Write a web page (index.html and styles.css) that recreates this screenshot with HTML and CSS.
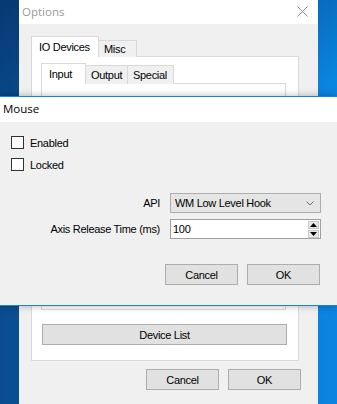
FILE: index.html
```html
<!DOCTYPE html>
<html lang="en">

<head>
    <meta charset="UTF-8">
    <title>Options</title>
    <link rel="stylesheet" href="styles.css">
</head>

<body>
    <div class="desktop">
        <!-- Options window (behind) -->
        <div class="window options">
            <div class="titlebar">
                <span class="title inactive">Options</span>
                <svg class="close" width="11" height="11" viewBox="0 0 11 11">
                    <path d="M0.5 0.5 L10.5 10.5 M10.5 0.5 L0.5 10.5" stroke="#8c8c8c" stroke-width="1" fill="none"/>
                </svg>
            </div>
            <div class="win-body">
                <div class="tabs outer-tabs">
                    <div class="tab active io-tab">IO Devices</div>
                    <div class="tab misc-tab">Misc</div>
                </div>
                <div class="tab-panel outer-panel">
                    <div class="tabs inner-tabs">
                        <div class="tab active input-tab">Input</div>
                        <div class="tab output-tab">Output</div>
                        <div class="tab special-tab">Special</div>
                    </div>
                    <div class="tab-panel inner-panel"></div>
                    <button type="button" class="btn wide">Device List</button>
                </div>
                <div class="btn-row options-buttons">
                    <button type="button" class="btn">Cancel</button>
                    <button type="button" class="btn">OK</button>
                </div>
            </div>
        </div>

        <!-- Mouse dialog (front) -->
        <div class="window dialog">
            <div class="titlebar dialog-title">
                <span class="title">Mouse</span>
            </div>
            <div class="dialog-body">
                <label class="check-row"><span class="checkbox"></span>Enabled</label>
                <label class="check-row"><span class="checkbox"></span>Locked</label>

                <div class="form-grid">
                    <span class="field-label">API</span>
                    <div class="combo">
                        <span>WM Low Level Hook</span>
                        <svg width="8" height="5" viewBox="0 0 8 5">
                            <path d="M0.5 0.5 L4 4 L7.5 0.5" stroke="#6d6d6d" stroke-width="1" fill="none"/>
                        </svg>
                    </div>
                    <span class="field-label">Axis Release Time (ms)</span>
                    <div class="spin">
                        <span class="spin-value">100</span>
                        <div class="spin-buttons">
                            <div class="spin-btn">
                                <svg width="7" height="4" viewBox="0 0 7 4"><path d="M3.5 0 L7 4 L0 4 Z" fill="#000"/></svg>
                            </div>
                            <div class="spin-btn">
                                <svg width="7" height="4" viewBox="0 0 7 4"><path d="M0 0 L7 0 L3.5 4 Z" fill="#000"/></svg>
                            </div>
                        </div>
                    </div>
                </div>

                <div class="btn-row dialog-buttons">
                    <button type="button" class="btn">Cancel</button>
                    <button type="button" class="btn">OK</button>
                </div>
            </div>
        </div>
    </div>
</body>

</html>
```

FILE: styles.css
```css
* {
    box-sizing: border-box;
}

body {
    margin: 0;
    padding: 0;
    width: 337px;
    height: 404px;
    overflow: hidden;
    font-family: "Microsoft Sans Serif", "Liberation Sans", Arial, sans-serif;
    font-size: 11px;
    letter-spacing: -0.3px;
    color: #000;
}

/* 桌面背景 */
.desktop {
    position: relative;
    width: 337px;
    height: 404px;
    background:
        linear-gradient(170deg, rgba(0, 20, 60, 0.35) 0%, rgba(0, 0, 0, 0) 30%),
        linear-gradient(90deg, #0a4c8f 0%, #0b5fae 40%, #0a86e2 100%);
}

.window {
    position: absolute;
}

.titlebar {
    display: flex;
    align-items: center;
    background-color: #fff;
}

.title {
    font-family: "Segoe UI", "Open Sans", "Noto Sans", sans-serif;
    font-size: 11.5px;
    letter-spacing: 0;
}

.title.inactive {
    color: #9a9a9a;
}

/* Options 視窗 */
.options {
    left: 19px;
    top: 0;
    width: 299px;
    height: 420px;
    background-color: #f0f0f0;
}

.options .titlebar {
    height: 24px;
    padding-left: 3px;
    justify-content: space-between;
    padding-right: 10px;
    padding-bottom: 2px;
}

.win-body {
    padding: 12px 19px 0 12px;
}

.tabs {
    display: flex;
    align-items: flex-end;
    margin-bottom: -1px;
}

.tab {
    position: relative;
    height: 17px;
    display: flex;
    align-items: center;
    background-color: #f0f0f0;
    border: 1px solid #d9d9d9;
    border-bottom: none;
    padding: 0 0 1px 5px;
}

.tab.active {
    z-index: 1;
    height: 21px;
    background-color: #fff;
    padding-left: 7px;
    padding-bottom: 0;
}

.io-tab { width: 68px; }
.misc-tab { width: 38px; border-left: none; }
.input-tab { width: 45px; height: 22px; }
.output-tab { width: 42px; height: 19px; border-left: none; }
.special-tab { width: 46px; height: 19px; border-left: none; }

.tab-panel {
    border: 1px solid #d9d9d9;
    background-color: #fff;
}

.outer-panel {
    width: 268px;
    padding: 6px 12px 15px 9px;
}

.inner-panel {
    height: 227px;
}

.btn {
    display: flex;
    align-items: center;
    justify-content: center;
    width: 73px;
    height: 21px;
    padding: 0;
    font-family: inherit;
    font-size: 11px;
    letter-spacing: -0.3px;
    color: #000;
    background-color: #e1e1e1;
    border: 1px solid #adadad;
}

.btn.wide {
    width: 245px;
    margin: 14px 0 0 1px;
}

.btn-row {
    display: flex;
    justify-content: flex-end;
    gap: 9px;
}

.options-buttons {
    margin-top: 8px;
    margin-right: -2px;
}

/* Mouse 對話框 */
.dialog {
    left: 0;
    top: 96px;
    width: 337px;
    height: 210px;
    border-top: 1px solid #1883d7;
    border-bottom: 1px solid #1883d7;
    background-color: #f0f0f0;
    box-shadow: 0 0 7px rgba(0, 0, 0, 0.3);
}

.dialog-title {
    height: 25px;
    padding-left: 3px;
    padding-bottom: 2px;
}

.dialog-body {
    padding: 14px 17px 0 11px;
}

.check-row {
    display: flex;
    align-items: center;
    gap: 6px;
    height: 13px;
    margin-bottom: 9px;
}

.checkbox {
    width: 13px;
    height: 13px;
    border: 1px solid #333;
    background-color: #fff;
}

.form-grid {
    display: grid;
    grid-template-columns: auto 151px;
    justify-content: end;
    align-items: center;
    column-gap: 10px;
    row-gap: 6px;
    margin-top: 22px;
    margin-right: -1px;
}

.field-label {
    text-align: right;
}

.combo {
    display: flex;
    align-items: center;
    justify-content: space-between;
    height: 20px;
    padding: 0 6px 0 4px;
    background-color: #e5e5e5;
    border: 1px solid #adadad;
}

.spin {
    display: flex;
    align-items: center;
    justify-content: space-between;
    height: 20px;
    padding: 0 1px 0 2px;
    background-color: #fff;
    border: 1px solid #a0a0a0;
}

.spin-buttons {
    display: flex;
    flex-direction: column;
    gap: 1px;
}

.spin-btn {
    display: flex;
    align-items: center;
    justify-content: center;
    width: 11px;
    height: 8px;
    background-color: #e8e8e8;
    border: 1px solid #c8c8c8;
}

.dialog-buttons {
    margin-top: 25px;
}
```
